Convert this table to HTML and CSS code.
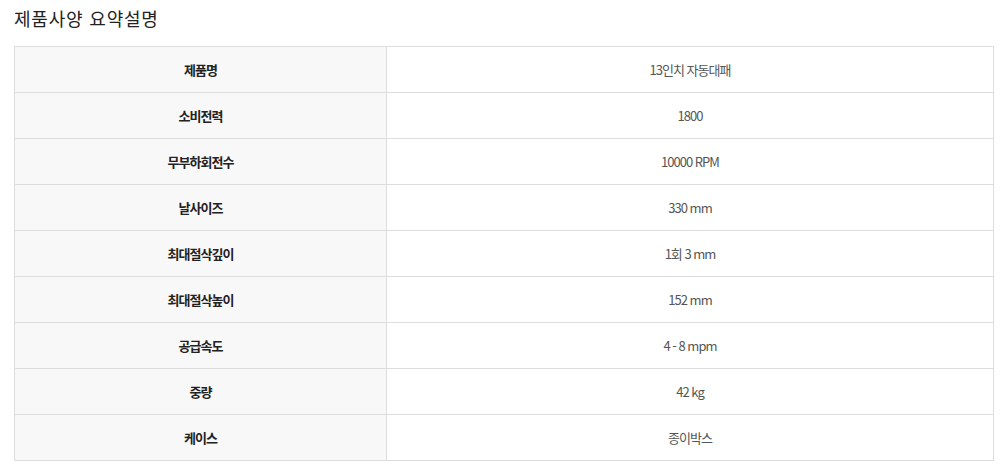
FILE: index.html
```html
<!DOCTYPE html>
<html lang="ko">
<head>
<meta charset="utf-8">
<title>제품사양 요약설명</title>
<link rel="stylesheet" href="styles.css">
</head>
<body>
<div class="spec">
  <h2 class="spec-title">제품사양 요약설명</h2>
  <table class="spec-table">
    <tbody>
      <tr><th>제품명</th><td>13인치 자동대패</td></tr>
      <tr><th>소비전력</th><td>1800</td></tr>
      <tr><th>무부하회전수</th><td>10000 RPM</td></tr>
      <tr><th>날사이즈</th><td>330 mm</td></tr>
      <tr><th>최대절삭깊이</th><td>1회 3 mm</td></tr>
      <tr><th>최대절삭높이</th><td>152 mm</td></tr>
      <tr><th>공급속도</th><td>4 - 8 mpm</td></tr>
      <tr><th>중량</th><td>42 kg</td></tr>
      <tr><th>케이스</th><td>종이박스</td></tr>
    </tbody>
  </table>
</div>
</body>
</html>
```
FILE: styles.css
```css
html, body {
  margin: 0;
  padding: 0;
  background: #fff;
}
body {
  font-family: "Noto Sans CJK KR", "Noto Sans", sans-serif;
  color: #333;
}
.spec {
  padding: 0 0 0 14px;
}
.spec-title {
  margin: 0;
  padding: 5px 0 0;
  height: 46px;
  box-sizing: border-box;
  font-size: 18px;
  font-weight: 400;
  line-height: 26px;
  color: #222;
  letter-spacing: 0.8px;
  word-spacing: 0;
}
.spec-table {
  width: 980px;
  border-collapse: collapse;
  table-layout: fixed;
}
.spec-table th,
.spec-table td {
  height: 45px;
  padding: 0;
  border: 1px solid #ddd;
  text-align: center;
  vertical-align: middle;
  font-size: 13px;
  letter-spacing: -1px;
}
.spec-table th {
  width: 371px;
  background: #f8f8f8;
  font-weight: 700;
  color: #222;
}
.spec-table td {
  background: #fff;
  color: #555;
  font-weight: 400;
}
```
